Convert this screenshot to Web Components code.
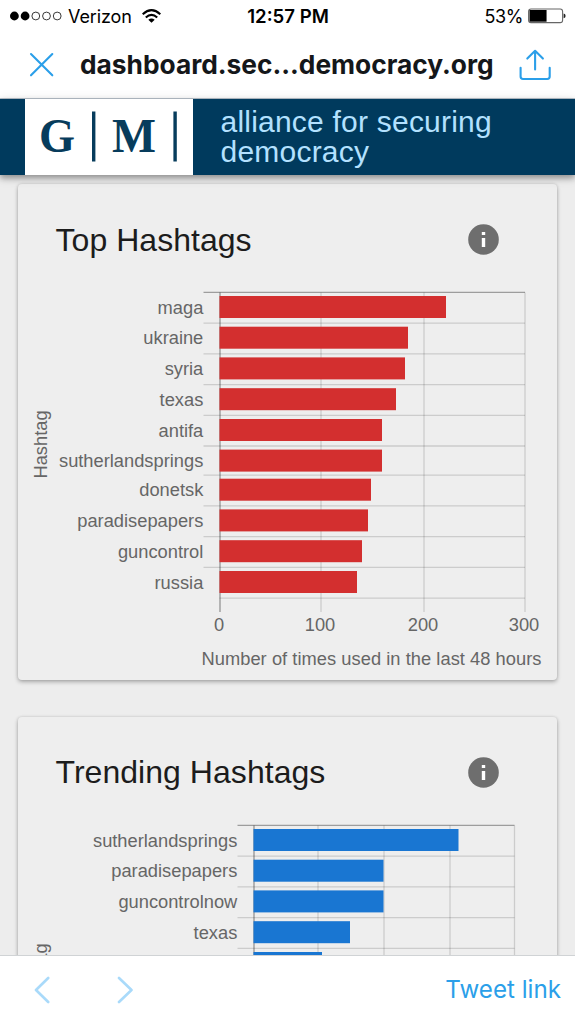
<!DOCTYPE html>
<html lang="en">
<head>
<meta charset="utf-8">
<meta name="viewport" content="width=device-width, initial-scale=1">
<title>Alliance for Securing Democracy</title>
<style>
  body {
    margin: 0;
    height: 1024px;
    overflow: hidden;
    background: #ededed;
    font-family: 'Liberation Sans', Arial, sans-serif;
  }
</style>
</head>
<body>
<browser-shell>
  <status-bar slot="top" carrier="Verizon" time="12:57 PM" battery="53"></status-bar>
  <nav-bar slot="top">dashboard.sec...democracy.org</nav-bar>
  <site-header slot="top">alliance for securing democracy</site-header>

  <chart-card heading="Top Hashtags">
    <bar-chart color="#d32f2f" left="219.5" ticks="220,321,424,525" labels="0,100,200,300"
      rows="maga:446,ukraine:408,syria:405,texas:396,antifa:382,sutherlandsprings:382,donetsk:371,paradisepapers:368,guncontrol:362,russia:357"
      caption="Number of times used in the last 48 hours"></bar-chart>
  </chart-card>
  <chart-card heading="Trending Hashtags">
    <bar-chart color="#1976d2" left="253.5" ticks="254,318,384,450,514.5" labels=""
      rows="sutherlandsprings:458.5,paradisepapers:383.5,guncontrolnow:383.5,texas:350,:322"
      caption=""></bar-chart>
  </chart-card>

  <tool-bar slot="bottom">Tweet link</tool-bar>
</browser-shell>

<script>
class BrowserShell extends HTMLElement {
  constructor() {
    super()
    this.attachShadow({ mode: 'open' }).innerHTML = `
      <style>
        :host { display: flex; flex-direction: column; width: 575px; height: 1024px; overflow: hidden; }
        .top { flex: none; position: relative; z-index: 1; }
        main {
          flex: 1; min-height: 0; overflow: hidden;
          display: flex; flex-direction: column; gap: 36.5px;
          padding: 9px 18px 0; box-sizing: border-box;
        }
        .bottom { flex: none; position: relative; z-index: 1; }
      </style>
      <div class="top"><slot name="top"></slot></div>
      <main><slot></slot></main>
      <div class="bottom"><slot name="bottom"></slot></div>
    `
  }
}

class StatusBar extends HTMLElement {
  connectedCallback() {
    const carrier = this.getAttribute('carrier') ?? ''
    const time = this.getAttribute('time') ?? ''
    const battery = Number(this.getAttribute('battery') ?? 100)
    const dots = [0, 1, 2, 3, 4]
      .map((i) => `<circle cx="${4.4 + i * 10.7}" cy="5" r="${i < 2 ? 4.4 : 3.9}" fill="${i < 2 ? '#000' : 'none'}" stroke="${i < 2 ? 'none' : '#222'}" stroke-width=".9"/>`)
      .join('')

    this.attachShadow({ mode: 'open' }).innerHTML = `
      <style>
        :host {
          display: grid; grid-template-columns: 1fr auto 1fr; align-items: center;
          height: 32px; padding: 0 9px 0 10px; box-sizing: border-box; background: #fff; color: #000;
          font-family: Inter, 'Liberation Sans', sans-serif; font-size: 18px;
        }
        svg { display: block; }
        .left, .right { display: flex; align-items: center; }
        .right { justify-content: flex-end; gap: 5px; }
        .carrier { margin: 0 10px 0 5px; letter-spacing: -.1px; }
        .time { font-size: 18.6px; font-weight: 600; letter-spacing: 0; }
        .pct { letter-spacing: -.4px; }
      </style>
      <div class="left">
        <svg width="53" height="10" viewBox="0 0 53 10">${dots}</svg>
        <span class="carrier">${carrier}</span>
        <svg width="19" height="14" viewBox="0 0 19 14" fill="none" stroke="#000" stroke-width="2.1">
          <path d="M.7 5.2Q9.5-2.8 18.3 5.2M3.8 8.6Q9.5 3.2 15.2 8.6"/>
          <path d="M9.5 13.8L6.3 10.8Q9.5 8 12.7 10.8z" fill="#000" stroke="none"/>
        </svg>
      </div>
      <span class="time">${time}</span>
      <div class="right">
        <span class="pct">${battery}%</span>
        <svg width="38" height="16" viewBox="0 0 38 16">
          <rect x=".6" y="1" width="34" height="13.6" rx="2.4" fill="#fff" stroke="#666" stroke-width="1.1"/>
          <path d="M1.5 2H${1.5 + (32.2 * battery) / 100}V13.7H1.5z" fill="#000"/>
          <path d="M35.6 5.5q2 .4 2 2.4t-2 2.4z" fill="#222"/>
        </svg>
      </div>
    `
  }
}

class NavBar extends HTMLElement {
  constructor() {
    super()
    this.attachShadow({ mode: 'open' }).innerHTML = `
      <style>
        :host {
          display: flex; align-items: center; height: 67px; box-sizing: border-box;
          padding: 0 24px 1px 29px; background: #fff; color: #14171a;
          border-bottom: 1px solid #b9c3cc;
        }
        svg { display: block; flex: none; fill: none; stroke: #2b9fe9; stroke-width: 2.1; stroke-linecap: round; stroke-linejoin: round; }
        .title {
          flex: 1; margin-left: 26px; white-space: nowrap;
          font: 700 26.3px/32px Inter, 'Liberation Sans', sans-serif;
        }
      </style>
      <svg width="25" height="25" viewBox="0 0 25 25"><path d="M2 2L23.3 23.3M23.3 2L2 23.3"/></svg>
      <span class="title"><slot></slot></span>
      <svg width="32" height="32" viewBox="0 0 32 32">
        <path d="M1.6 18.8V27.6Q1.6 30 4 30H28.3Q30.7 30 30.7 27.6V18.8M16.1 20.5V1.8M8.3 9.6L16.1 1.8L23.9 9.6"/>
      </svg>
    `
  }
}

class SiteHeader extends HTMLElement {
  constructor() {
    super()
    this.attachShadow({ mode: 'open' }).innerHTML = `
      <style>
        :host {
          display: flex; height: 76px; padding-left: 25px; background: #003a5d;
          box-shadow: 0 3px 6px rgba(0,0,0,.34), 0 2px 12px rgba(0,0,0,.12);
        }
        svg { display: block; background: #fff; }
        .name {
          width: 310px; margin: 7.5px 0 0 27.5px; color: #b3e1ff;
          font-size: 30px; line-height: 30.7px; letter-spacing: .22px;
        }
      </style>
      <svg width="168" height="76" viewBox="0 1 168 76">
        <g fill="#073c5c" font-family="'Liberation Serif', serif" font-weight="700" font-size="49">
          <text x="14" y="54" textLength="36" lengthAdjust="spacingAndGlyphs">G</text>
          <text x="87" y="54" textLength="44" lengthAdjust="spacingAndGlyphs">M</text>
          <path d="M67 13.5h3.4v50H67zM148.4 13.5h3.4v50h-3.4z"/>
        </g>
      </svg>
      <div class="name"><slot></slot></div>
    `
  }
}

class ChartCard extends HTMLElement {
  connectedCallback() {
    const heading = this.getAttribute('heading') ?? ''
    this.attachShadow({ mode: 'open' }).innerHTML = `
      <style>
        :host {
          display: block; flex: none; height: 496px; border-radius: 4px; background: #eee;
          box-shadow: 0 2px 4px rgba(0,0,0,.28), 0 0 3px rgba(0,0,0,.12);
        }
        header { display: flex; align-items: center; justify-content: space-between; height: 92px; padding: 19px 58.5px 0 37.5px; box-sizing: border-box; }
        h2 { margin: 0; font-size: 32px; font-weight: 400; line-height: 38px; letter-spacing: .04px; color: #1c1c1c; }
        svg { display: block; }
      </style>
      <header>
        <h2>${heading}</h2>
        <svg width="31" height="31" viewBox="0 0 31 31">
          <circle cx="15.5" cy="15.5" r="15.3" fill="#6e6e6e"/>
          <path d="M13.8 7.9h3.4v3.1h-3.4zM13.8 13.9h3.4v9h-3.4z" fill="#fff"/>
        </svg>
      </header>
      <slot></slot>
    `
  }
}

// Edges between the chart rows, from the top axis line down.
const ROW_LINES = [0, 30.7, 61.4, 92.2, 123, 153.6, 182.7, 213.4, 244.2, 275, 305.7]

class BarChart extends HTMLElement {
  connectedCallback() {
    const list = (name) => (this.getAttribute(name) ?? '').split(',')
    const color = this.getAttribute('color')
    const left = Number(this.getAttribute('left'))
    const caption = this.getAttribute('caption') ?? ''
    const ticks = list('ticks').map(Number)
    const labels = list('labels')
    const rows = list('rows').map((row) => row.split(':'))
    const right = ticks[ticks.length - 1]
    const top = 16.4

    const lines = ROW_LINES.map((y, i) => {
      const start = i === ROW_LINES.length - 1 ? left : left - 16
      return `<path d="M${start} ${top + y}H${right}" stroke-opacity="${i ? 0.14 : 0.34}"/>`
    })
    const columns = ticks.map((x, i) => `<path d="M${x} ${top}V336" stroke-opacity="${i ? 0.14 : 0.38}"/>`)
    const bars = rows.map(([, end], i) =>
      `<rect x="${left}" y="${top + ROW_LINES[i] + 3.6}" width="${end - left}" height="22" fill="${color}"/>`
    )
    const names = rows.map(([name], i) =>
      name ? `<text x="${left - 16.2}" y="${top + ROW_LINES[i] + 21.1}" text-anchor="end">${name}</text>` : ''
    )
    const numbers = labels.map((label, i) =>
      label ? `<text x="${ticks[i] - 1}" y="355" text-anchor="middle">${label}</text>` : ''
    )

    this.attachShadow({ mode: 'open' }).innerHTML = `
      <style>
        :host { display: block; height: 404px; }
        svg { display: block; }
        text { font: 18.3px 'Liberation Sans', Arial, sans-serif; fill: #666; }
      </style>
      <svg width="539" height="404" viewBox="18 0 539 404">
        <g stroke="#000" stroke-width="1.3">${lines.join('')}${columns.join('')}</g>
        ${bars.join('')}
        ${names.join('')}
        ${numbers.join('')}
        <text transform="translate(46.7 168.5) rotate(-90)" text-anchor="middle">Hashtag</text>
        ${caption ? `<text x="371.5" y="389" text-anchor="middle" textLength="340">${caption}</text>` : ''}
      </svg>
    `
  }
}

class ToolBar extends HTMLElement {
  constructor() {
    super()
    this.attachShadow({ mode: 'open' }).innerHTML = `
      <style>
        :host {
          display: flex; align-items: center; height: 69px; box-sizing: border-box;
          padding: 0 14px 0 34px; background: #fff; border-top: 1px solid #d0d3d5;
        }
        svg { display: block; fill: none; stroke: #a9dafa; stroke-width: 2.6; stroke-linecap: round; stroke-linejoin: round; }
        .next { margin-left: 67px; }
        .link { margin-left: auto; color: #2b9fe9; font: 400 24.2px/30px Inter, 'Liberation Sans', sans-serif; }
      </style>
      <svg width="16" height="28" viewBox="0 0 16 28"><path d="M14.2 2L2 14L14.2 26"/></svg>
      <svg class="next" width="16" height="28" viewBox="0 0 16 28"><path d="M2 2L14.5 14L2 26"/></svg>
      <span class="link"><slot></slot></span>
    `
  }
}

customElements.define('browser-shell', BrowserShell)
customElements.define('status-bar', StatusBar)
customElements.define('nav-bar', NavBar)
customElements.define('site-header', SiteHeader)
customElements.define('chart-card', ChartCard)
customElements.define('bar-chart', BarChart)
customElements.define('tool-bar', ToolBar)
</script>
</body>
</html>
